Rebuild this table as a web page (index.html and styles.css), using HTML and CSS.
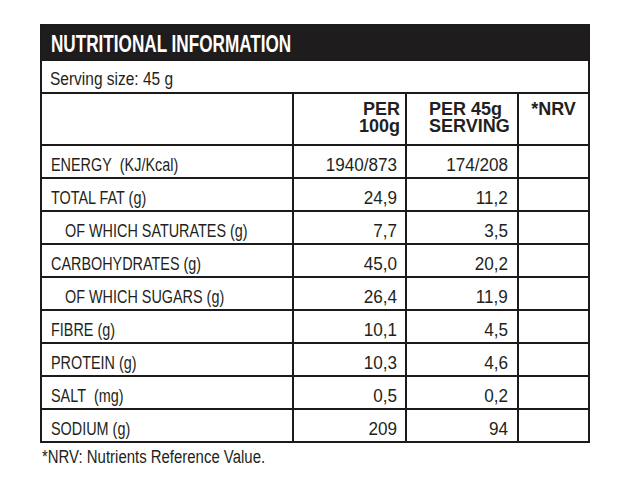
FILE: index.html
```html
<!DOCTYPE html>
<html lang="en">
<head>
<meta charset="utf-8">
<title>Nutritional Information</title>
<link rel="stylesheet" href="styles.css">
</head>
<body>
<div class="label">
  <table class="facts">
    <colgroup>
      <col class="c-name">
      <col class="c-100">
      <col class="c-serv">
      <col class="c-nrv">
    </colgroup>
    <thead>
      <tr><th colspan="4" class="title"><span class="cond">NUTRITIONAL INFORMATION</span></th></tr>
      <tr><td colspan="4" class="serving"><span class="cond">Serving size: 45 g</span></td></tr>
      <tr class="head-row">
        <th class="h-empty"></th>
        <th class="h-100">PER<br>100g</th>
        <th class="h-serv">PER 45g<br>SERVING</th>
        <th class="h-nrv">*NRV</th>
      </tr>
    </thead>
    <tbody>
      <tr><td class="name"><span class="cond">ENERGY&nbsp; (KJ/Kcal)</span></td><td class="num"><span class="digits">1940/873</span></td><td class="num num-serv"><span class="digits">174/208</span></td><td class="nrv"></td></tr>
      <tr><td class="name"><span class="cond">TOTAL FAT (g)</span></td><td class="num"><span class="digits">24,9</span></td><td class="num num-serv"><span class="digits">11,2</span></td><td class="nrv"></td></tr>
      <tr><td class="name sub"><span class="cond">OF WHICH SATURATES (g)</span></td><td class="num"><span class="digits">7,7</span></td><td class="num num-serv"><span class="digits">3,5</span></td><td class="nrv"></td></tr>
      <tr><td class="name"><span class="cond">CARBOHYDRATES (g)</span></td><td class="num"><span class="digits">45,0</span></td><td class="num num-serv"><span class="digits">20,2</span></td><td class="nrv"></td></tr>
      <tr><td class="name sub"><span class="cond">OF WHICH SUGARS (g)</span></td><td class="num"><span class="digits">26,4</span></td><td class="num num-serv"><span class="digits">11,9</span></td><td class="nrv"></td></tr>
      <tr><td class="name"><span class="cond">FIBRE (g)</span></td><td class="num"><span class="digits">10,1</span></td><td class="num num-serv"><span class="digits">4,5</span></td><td class="nrv"></td></tr>
      <tr><td class="name"><span class="cond">PROTEIN (g)</span></td><td class="num"><span class="digits">10,3</span></td><td class="num num-serv"><span class="digits">4,6</span></td><td class="nrv"></td></tr>
      <tr><td class="name"><span class="cond">SALT&nbsp; (mg)</span></td><td class="num"><span class="digits">0,5</span></td><td class="num num-serv"><span class="digits">0,2</span></td><td class="nrv"></td></tr>
      <tr><td class="name"><span class="cond">SODIUM (g)</span></td><td class="num"><span class="digits">209</span></td><td class="num num-serv"><span class="digits">94</span></td><td class="nrv"></td></tr>
    </tbody>
  </table>
  <p class="note"><span class="cond">*NRV: Nutrients Reference Value.</span></p>
</div>
</body>
</html>
```

FILE: styles.css
```css
html, body {
  margin: 0;
  padding: 0;
  background: #ffffff;
}

body {
  color: #231f20;
  font-family: "Liberation Sans", Arial, sans-serif;
}

.label {
  padding: 24px 0 0 40px;
}

/* Condensed look (Helvetica Condensed in the original) */
.cond {
  display: inline-block;
  white-space: nowrap;
  transform: scaleX(0.8);
  transform-origin: left center;
}

.digits {
  display: inline-block;
  white-space: nowrap;
  transform: scaleX(0.95);
  transform-origin: right center;
}

.facts {
  width: 550px;
  table-layout: fixed;
  border-collapse: separate;
  border-spacing: 0;
  border-top: 2px solid #1c1a1b;
  border-left: 2px solid #1c1a1b;
}

.c-name { width: 252px; }
.c-100 { width: 113px; }
.c-serv { width: 112px; }
.c-nrv { width: 71px; }

.facts th,
.facts td {
  border-right: 2px solid #1c1a1b;
  border-bottom: 2px solid #1c1a1b;
  padding: 0;
  vertical-align: top;
  font-weight: normal;
  overflow: visible;
}

.facts .title {
  background: #1e1c1d;
  color: #ffffff;
  text-align: left;
  font-weight: bold;
  font-size: 23px;
  line-height: 26px;
  padding: 5px 0 2px 9px;
}

.title .cond {
  transform: scaleX(0.745);
}

.facts .serving {
  font-size: 18px;
  line-height: 20px;
  padding: 8px 0 3px 8px;
}

.serving .cond {
  transform: scaleX(0.86);
}

.facts .head-row th {
  font-weight: bold;
  font-size: 18px;
  line-height: 17px;
  height: 34px;
  padding: 7px 0 9px 0;
  white-space: nowrap;
}

.facts .head-row .h-100 {
  text-align: right;
  padding-right: 5px;
}

.facts .head-row .h-serv {
  text-align: left;
  padding-left: 22px;
}

.facts .head-row .h-nrv {
  text-align: center;
}

.facts tbody td {
  font-size: 18px;
  line-height: 20px;
  padding: 9px 0 2px 0;
}

.facts tbody .name {
  padding-left: 9px;
}

.facts tbody .name.sub {
  padding-left: 23px;
}

.facts tbody .num {
  text-align: right;
  padding-right: 8px;
}

.facts tbody .num-serv {
  padding-right: 9px;
}

.note {
  margin: 4px 0 0 2px;
  font-size: 18px;
  line-height: 20px;
}

.note .cond {
  transform: scaleX(0.83);
}
```
